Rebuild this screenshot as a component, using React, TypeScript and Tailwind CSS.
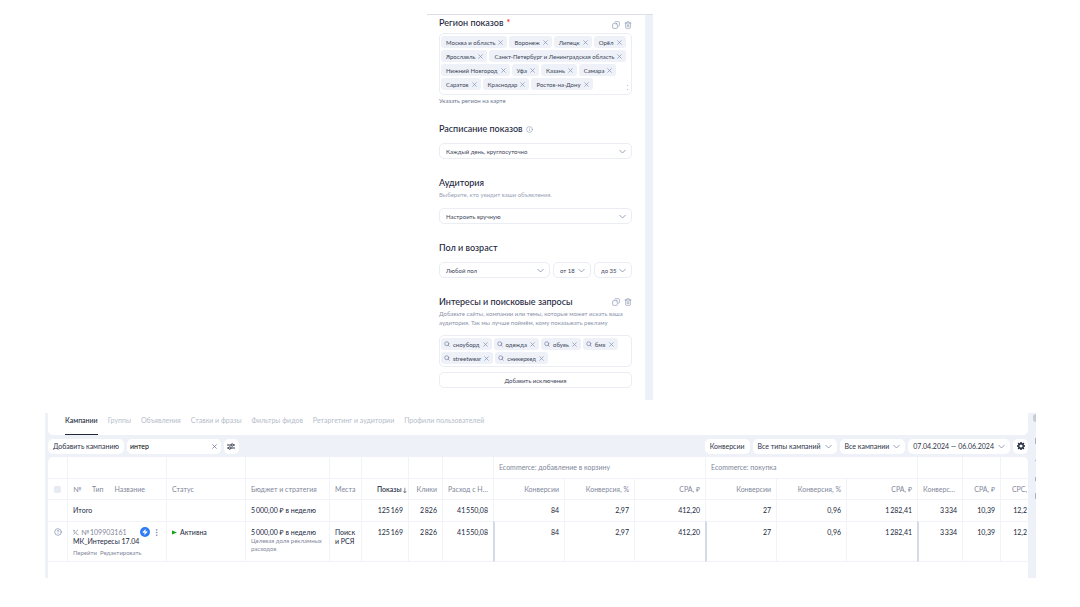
import React from 'react'
import { Copy, HelpCircle, Info, MoreVertical, Search, Trash2, Zap } from 'lucide-react'
import clsx from 'clsx'

const regions = [
  ['Москва и область', 'Воронеж', 'Липецк', 'Орёл'],
  ['Ярославль', 'Санкт-Петербург и Ленинградская область'],
  ['Нижний Новгород', 'Уфа', 'Казань', 'Самара'],
  ['Саратов', 'Краснодар', 'Ростов-на-Дону'],
]

const interests = [
  ['сноуборд', 'одежда', 'обувь', 'бмх'],
  ['streetwear', 'сникерхед'],
]

const tabs = [
  'Кампании',
  'Группы',
  'Объявления',
  'Ставки и фразы',
  'Фильтры фидов',
  'Ретаргетинг и аудитории',
  'Профили пользователей',
]

const columnWidths = [19, 99, 79, 84, 32, 47, 34, 51, 71, 70, 71, 71, 70, 71, 45, 38, 28]

// thin spaces between the thousands
const metrics = [
  '125\u2009169',
  '2\u2009826',
  '41\u2009550,08',
  '84',
  '2,97',
  '412,20',
  '27',
  '0,96',
  '1\u2009282,41',
  '3\u2009334',
  '10,39',
  '12,2',
]

// columns that open a new metric group
const groupStart = [3, 6, 9]

function Chevron({ className }: { className?: string }) {
  return (
    <svg viewBox="0 0 14 14" className={clsx('size-[7px] shrink-0 text-[#8d97b3]', className)} fill="none" stroke="currentColor" strokeWidth="1.8">
      <path d="M1 4l6 6 6-6" />
    </svg>
  )
}

function Cross({ className }: { className?: string }) {
  return (
    <svg viewBox="0 0 12 12" className={clsx('shrink-0', className)} fill="none" stroke="currentColor" strokeWidth="1.8">
      <path d="M1 1l10 10M11 1L1 11" />
    </svg>
  )
}

function Chip({ label, search }: { label: string; search?: boolean }) {
  return (
    <span className={clsx('flex h-3 items-center gap-[3px] rounded-[3px] bg-[#eef1f7] pr-[4px] text-[6px] text-[#3c4558]', search ? 'pl-[3px]' : 'pl-[5px]')}>
      {search && <Search className="size-[6px] text-[#7d89ab]" strokeWidth={3} />}
      {label}
      <button type="button" aria-label={`Удалить ${label}`}>
        <Cross className="size-[5px] text-[#8a96b8]" />
      </button>
    </span>
  )
}

function ChipBox({ rows, search }: { rows: string[][]; search?: boolean }) {
  return (
    <div className="relative space-y-[2px] rounded-[5px] border border-[#eaedf4] px-px py-[2px]">
      {rows.map((row) => (
        <div key={row[0]} className="flex gap-[2px]">
          {row.map((label) => (
            <Chip key={label} label={label} search={search} />
          ))}
        </div>
      ))}
      {!search && (
        <span className="absolute right-[3px] bottom-1 flex flex-col gap-[3px]">
          <i className="size-px bg-[#b9c0d0]" />
          <i className="size-px bg-[#b9c0d0]" />
        </span>
      )}
    </div>
  )
}

function SelectBox({ label, value, className }: { label: string; value: string; className?: string }) {
  return (
    <div className={clsx('relative', className)}>
      <select
        aria-label={label}
        className="block h-4 w-full appearance-none rounded-[5px] border border-[#eaedf4] bg-white pl-[6px] text-[6px] text-[#3c4558]"
      >
        <option>{value}</option>
      </select>
      <Chevron className="pointer-events-none absolute top-[5px] right-[6px]" />
    </div>
  )
}

function SectionActions() {
  return (
    <div className="flex gap-1 text-[#8b96b0]">
      <button type="button" aria-label="Копировать">
        <Copy className="size-2 -scale-x-100" />
      </button>
      <button type="button" aria-label="Удалить">
        <Trash2 className="size-2" />
      </button>
    </div>
  )
}

function Title({ children }: { children: React.ReactNode }) {
  return <h2 className="flex items-center gap-[3px] text-[9px] leading-3 font-medium text-[#1d2640]">{children}</h2>
}

function TargetingPanel() {
  return (
    <section className="mx-auto w-[226px] border-t border-[#dcdfe4]">
      <div className="border-r-8 border-[#eef1f7] pr-[13px] pb-3 pl-3">
        <div className="flex items-end justify-between pt-[2px]">
          <Title>
            Регион показов <span className="text-[#f00]">*</span>
          </Title>
          <SectionActions />
        </div>
        <div className="mt-1">
          <ChipBox rows={regions} />
        </div>
        <a href="#map" className="mt-[2px] block text-[6px] leading-2 text-[#6d7690]">Указать регион на карте</a>

        <div className="mt-[18px]">
          <Title>
            Расписание показов <Info className="size-[7px] text-[#8d97b3]" />
          </Title>
          <SelectBox label="Расписание показов" value="Каждый день, круглосуточно" className="mt-2" />
        </div>

        <div className="mt-[18px]">
          <Title>Аудитория</Title>
          <p className="mt-[2px] text-[6px] leading-2 text-[#9aa3b8]">Выберите, кто увидит ваши объявления.</p>
          <SelectBox label="Аудитория" value="Настроить вручную" className="mt-[9px]" />
        </div>

        <div className="mt-[18px]">
          <Title>Пол и возраст</Title>
          <div className="mt-2 flex gap-[3px]">
            <SelectBox label="Пол" value="Любой пол" className="flex-1" />
            <SelectBox label="Возраст от" value="от 18" className="w-[38px]" />
            <SelectBox label="Возраст до" value="до 35" className="w-[38px]" />
          </div>
        </div>

        <div className="mt-[18px]">
          <div className="flex items-center justify-between">
            <Title>Интересы и поисковые запросы</Title>
            <SectionActions />
          </div>
          <p className="mt-px text-[6px] leading-[9px] text-[#8b94aa]">
            Добавьте сайты, компании или темы, которые может искать ваша аудитория. Так мы лучше поймём, кому показывать рекламу
          </p>
          <div className="mt-2">
            <ChipBox rows={interests} search />
          </div>
          <button type="button" className="mt-[5px] block h-4 w-full rounded-[5px] border border-[#eaedf4] text-[6px] text-[#3c4558]">
            Добавить исключения
          </button>
        </div>
      </div>
    </section>
  )
}

function ToolbarButton({ children, chevron }: { children: React.ReactNode; chevron?: boolean }) {
  return (
    <button type="button" className="flex h-[15px] items-center gap-1 rounded-[5px] bg-white px-[5px] whitespace-nowrap">
      {children}
      {chevron && <Chevron />}
    </button>
  )
}

function Toolbar() {
  return (
    <div className="flex h-[22px] items-center gap-[3px] text-[7px] text-[#2b3347]">
      <ToolbarButton>Добавить кампанию</ToolbarButton>
      <div className="flex h-[15px] w-[94px] items-center rounded-[5px] bg-white pr-1 pl-[3px]">
        <input aria-label="Поиск кампаний" defaultValue="интер" className="min-w-0 flex-1 text-black outline-none" />
        <button type="button" aria-label="Очистить">
          <Cross className="size-[5px] text-[#6d7690]" />
        </button>
      </div>
      <button type="button" aria-label="Фильтры" className="flex size-[15px] items-center justify-center rounded-[5px] bg-white">
        <svg viewBox="0 0 16 14" className="h-[7px] w-2" fill="none" stroke="#20283c" strokeWidth="1.8">
          <path d="M0 4h8M13 4h3M0 10h3M8 10h8" />
          <circle cx="10.500" cy="4" r="2.400" />
          <circle cx="5.500" cy="10" r="2.400" />
        </svg>
      </button>
      <div className="ml-auto flex gap-[3px]">
        <ToolbarButton>Конверсии</ToolbarButton>
        <ToolbarButton chevron>Все типы кампаний</ToolbarButton>
        <ToolbarButton chevron>Все кампании</ToolbarButton>
        <ToolbarButton chevron>07.04.2024 — 06.06.2024</ToolbarButton>
        <button type="button" aria-label="Настройки" className="flex size-[15px] items-center justify-center rounded-[5px] bg-white">
          <svg viewBox="0 0 16 16" className="size-2" fill="none" stroke="#20283c">
            <circle cx="8" cy="8" r="4.500" strokeWidth="2.600" />
            <path strokeWidth="3" d="M8 0v3M8 13v3M0 8h3M13 8h3M2.300 2.300l2 2M11.700 11.700l2 2M13.700 2.300l-2 2M4.300 11.700l-2 2" />
          </svg>
        </button>
      </div>
    </div>
  )
}

const cell = 'border-l border-t border-[#f1f3f8] px-[5px] align-top'
const head = 'border-l border-t border-[#f1f3f8] px-[5px] text-left font-normal whitespace-nowrap'

function CampaignTable() {
  return (
    <div className="overflow-hidden rounded-t-[5px] bg-white pb-4">
      <table className="w-full table-fixed border-separate border-spacing-0 text-[7px] leading-[9px] text-[#20283c]">
        <colgroup>
          {columnWidths.map((width, i) => (
            <col key={i} style={{ width }} />
          ))}
        </colgroup>
        <thead className="text-[#7f879b]">
          <tr className="h-[21px]">
            <td />
            {[1, 2, 3, 4, 5, 6, 7].map((i) => (
              <td key={i} className="border-l border-[#f1f3f8]" />
            ))}
            <th colSpan={3} className="border-l border-[#f1f3f8] px-[5px] text-left font-normal">Ecommerce: добавление в корзину</th>
            <th colSpan={3} className="border-l border-[#f1f3f8] px-[5px] text-left font-normal">Ecommerce: покупка</th>
            {[1, 2, 3].map((i) => (
              <td key={i} className="border-l border-[#f1f3f8]" />
            ))}
          </tr>
          <tr className="h-[21px]">
            <th className="border-t border-[#f1f3f8]">
              <input type="checkbox" aria-label="Выбрать все" className="mx-auto block size-[7px] appearance-none rounded-[2px] bg-[#e6eaf1]" />
            </th>
            <th className={head}>
              <span className="flex gap-[11px]">
                <span>№</span>
                <span>Тип</span>
                <span>Название</span>
              </span>
            </th>
            <th className={head}>Статус</th>
            <th className={head}>Бюджет и стратегия</th>
            <th className={head}>Места</th>
            <th className="border-t border-l border-[#f1f3f8] pr-px text-right font-medium whitespace-nowrap text-[#20283c]">
              Показы<span className="ml-px text-[6px]">↓</span>
            </th>
            <th className={clsx(head, 'text-right')}>Клики</th>
            <th className={clsx(head, 'truncate')}>Расход с НДС</th>
            <th className={clsx(head, 'text-right')}>Конверсии</th>
            <th className={clsx(head, 'text-right')}>Конверсия, %</th>
            <th className={clsx(head, 'text-right')}>CPA, ₽</th>
            <th className={clsx(head, 'text-right')}>Конверсии</th>
            <th className={clsx(head, 'text-right')}>Конверсия, %</th>
            <th className={clsx(head, 'text-right')}>CPA, ₽</th>
            <th className={clsx(head, 'truncate')}>Конверсии</th>
            <th className={clsx(head, 'text-right')}>CPA, ₽</th>
            <th className="border-t border-l border-[#f1f3f8] pr-px text-right font-normal">CPC,</th>
          </tr>
        </thead>
        <tbody>
          <tr className="h-[22px]">
            <td className="border-t border-[#f1f3f8]" />
            <td className={clsx(cell, 'pt-[6px]')}>Итого</td>
            <td className={cell} />
            <td className={clsx(cell, 'pt-[6px] whitespace-nowrap')}>5&thinsp;000,00 ₽ в неделю</td>
            <td className={cell} />
            {metrics.map((value, i) => (
              <td
                key={i}
                className={clsx(
                  'border-t border-l border-[#f1f3f8] pt-[6px] text-right align-top whitespace-nowrap',
                  i === metrics.length - 1 ? 'pr-px' : 'px-[5px]',
                )}
              >
                {value}
              </td>
            ))}
          </tr>
          <tr className="h-[41px]">
            <td className="border-t border-b border-[#f1f3f8] pt-[6px] align-top">
              <HelpCircle className="mx-auto size-2 text-[#7d89ab]" />
            </td>
            <td className={clsx(cell, 'border-b pt-[5px]')}>
              <div className="flex items-center gap-[2px] whitespace-nowrap text-[#7f879b]">
                <svg viewBox="0 0 12 14" className="h-[7px] w-[6px]" fill="none" stroke="#7f879b" strokeWidth="1.4">
                  <path d="M0 3h4M1 6h3M10 2C7 3 6 5 6 7s1 4 5 4M5 7L1 11" />
                </svg>
                №&thinsp;109903161
                <span className="ml-auto flex size-[10px] items-center justify-center rounded-full bg-[#2f7cf6]">
                  <Zap className="size-[6px] fill-white text-white" />
                </span>
                <button type="button" aria-label="Ещё">
                  <MoreVertical className="size-[9px] text-[#7d89ab]" />
                </button>
              </div>
              <div>МК_Интересы 17.04</div>
              <div className="mt-[2px] flex gap-[3px] text-[6px] text-[#7f879b]">
                <a href="#open">Перейти</a>
                <a href="#edit">Редактировать</a>
              </div>
            </td>
            <td className={clsx(cell, 'border-b pt-[6px]')}>
              <span className="flex items-center gap-[3px]">
                <svg viewBox="0 0 6 6" className="size-[5px]">
                  <path d="M0 0.500l6 2.500-6 2.500z" fill="#14a514" />
                </svg>
                Активна
              </span>
            </td>
            <td className={clsx(cell, 'border-b pt-[6px]')}>
              <div className="whitespace-nowrap">5&thinsp;000,00 ₽ в неделю</div>
              <div className="text-[6px] leading-2 text-[#7f879b]">Целевая доля рекламных расходов</div>
            </td>
            <td className={clsx(cell, 'border-b pt-[6px]')}>Поиск и РСЯ</td>
            {metrics.map((value, i) => (
              <td
                key={i}
                className={clsx(
                  'border-t border-b border-[#f1f3f8] pt-[6px] text-right align-top whitespace-nowrap',
                  i === metrics.length - 1 ? 'pr-px' : 'px-[5px]',
                  groupStart.includes(i) ? 'border-l-2 border-l-[#d5dae6]' : 'border-l',
                )}
              >
                {value}
              </td>
            ))}
          </tr>
        </tbody>
      </table>
    </div>
  )
}

function CampaignsPanel() {
  return (
    <section className="mt-[13px] mr-11 ml-[45px] flex bg-[#eef1f7] pl-[3px]">
      <div className="min-w-0 flex-1">
        <nav className="flex h-[22px] gap-[10px] rounded-b-[5px] bg-white pl-[17px] text-[7px] text-[#b5bccb]">
          {tabs.map((tab, i) => (
            <a
              key={tab}
              href="#tab"
              className={clsx('border-b pt-[3px] leading-[9px]', i === 0 ? 'border-[#20283c] font-medium text-[#20283c]' : 'border-transparent')}
            >
              {tab}
            </a>
          ))}
        </nav>
        <Toolbar />
        <CampaignTable />
      </div>
      <aside className="flex w-2 flex-col items-end overflow-hidden pt-px">
        <i className="h-2 w-[3px] rounded-l-full bg-[#c9ccd3]" />
        <i className="mt-4 h-[6px] w-px bg-[#aab3c8]" />
        <i className="mt-4 size-px bg-[#aab3c8]" />
        <i className="mt-4 h-1 w-px bg-[#aab3c8]" />
        <i className="mt-3 h-[6px] w-px bg-[#aab3c8]" />
      </aside>
    </section>
  )
}

export default function App() {
  return (
    <div className="bg-white pt-[14px] font-['Lato','Noto_Sans',sans-serif]">
      <TargetingPanel />
      <CampaignsPanel />
    </div>
  )
}
